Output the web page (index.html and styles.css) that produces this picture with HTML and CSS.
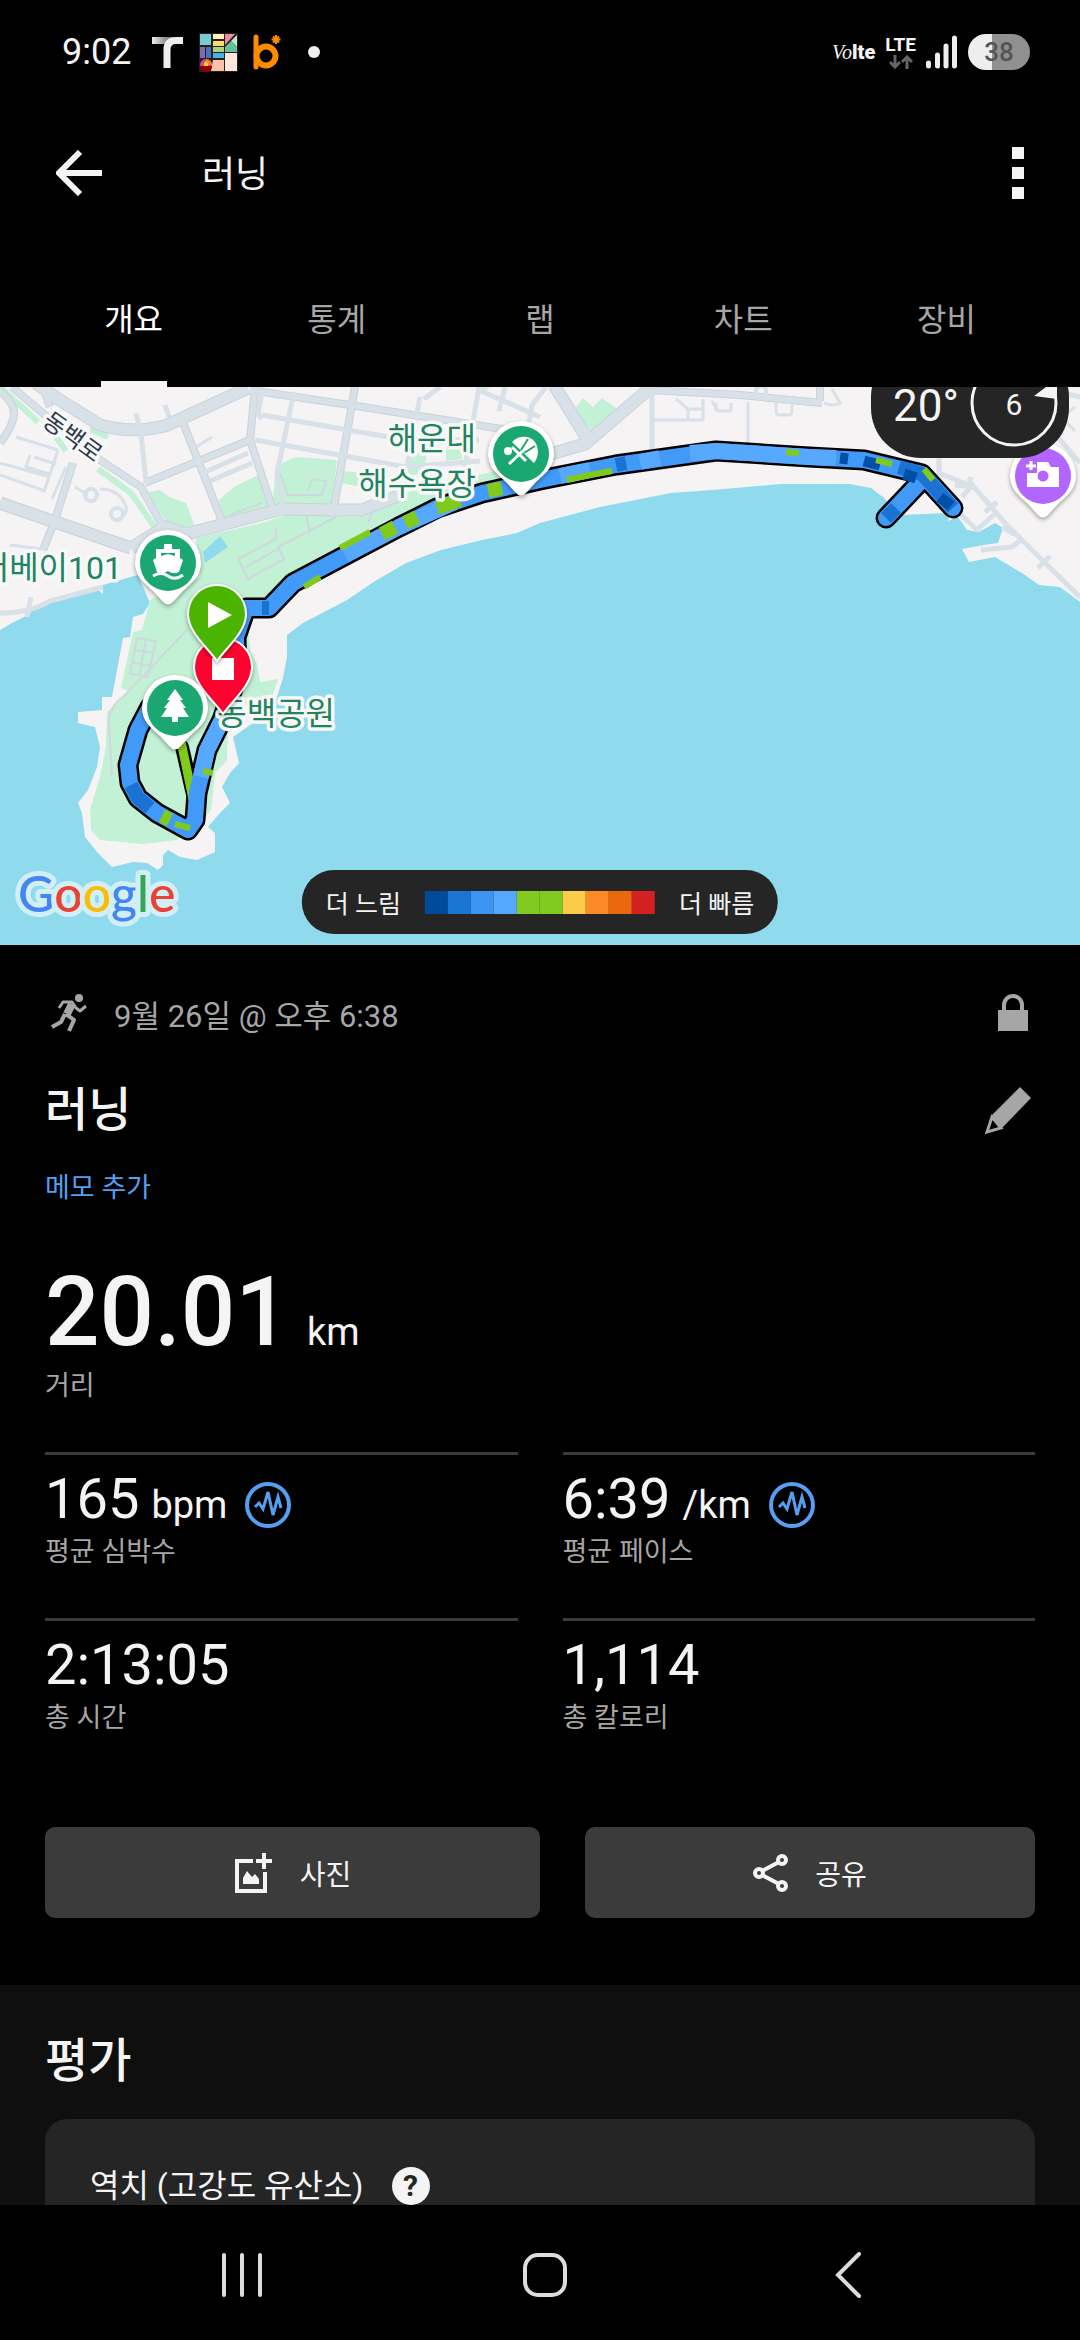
FILE: index.html
```html
<!DOCTYPE html>
<html lang="ko">
<head>
    <meta charset="UTF-8">
    <meta name="viewport" content="width=device-width, initial-scale=1.0">
    <meta name="color-scheme" content="dark">
    <title>러닝</title>
    <link rel="stylesheet" href="styles.css">
</head>
<body>
    <div class="status-bar">
        <div class="status-left">
            <span class="clock">9:02</span>
            <svg width="32" height="32" viewBox="0 0 32 32">
                <defs>
                    <linearGradient id="fade"><stop offset="0" stop-color="#eee"/><stop offset="1" stop-color="#555"/></linearGradient>
                </defs>
                <path d="M0 1h22l-6 7H0z" fill="url(#fade)"/>
                <path d="M31 4.500h-7q-9 0-9 9V32" fill="none" stroke="#eee" stroke-width="7"/>
            </svg>
            <svg width="39" height="39" viewBox="0 0 39 39">
                <rect width="39" height="39" fill="#222"/>
                <path d="M1 1h11v11H1z" fill="#79cbd0"/>
                <path d="M14 1h11v5H14z" fill="#fff3b8"/>
                <path d="M14 8h11v5H14z" fill="#fcd872"/>
                <path d="M26 1h10l-10 11z" fill="#f08aa0"/>
                <path d="M38 2v12l-6-6z" fill="#bfe8cc"/>
                <path d="M26 14l6-6 6 6v5H26z" fill="#64c096"/>
                <path d="M1 14h5v11H1z" fill="#8468b4"/>
                <path d="M7 14h5v11H7z" fill="#4a72b8"/>
                <path d="M14 14h11v5H14z" fill="#b0d07a"/>
                <path d="M14 20h11v5H14z" fill="#4cb0e8"/>
                <path d="M14 27h11v11H12z" fill="#fcc0a8"/>
                <path d="M26 20h12v18H26z" fill="#ffe6dc"/>
                <circle cx="7" cy="32" r="6" fill="#e0409a"/>
                <path d="M7 26a6 6 0 0 1 6 6H7z" fill="#f08030"/>
                <path d="M1 33h12a6 6 0 0 1-12 0z" fill="#900"/>
                <path d="M5 33v-3l2-2 2 2v3z" fill="#fd0"/>
            </svg>
            <svg width="28" height="36" viewBox="0 0 28 36">
                <path d="M3 3v30" stroke="#fb8c00" stroke-width="5" stroke-linecap="round"/>
                <circle cx="13" cy="22" r="9.500" fill="none" stroke="#fb8c00" stroke-width="6"/>
                <path d="M23 1v9M18.500 5.500h9M20 2.500l6 6M26 2.500l-6 6" stroke="#fb8c00" stroke-width="2"/>
            </svg>
            <span class="dot"></span>
        </div>
        <div class="status-right">
            <span class="volte"><i>Vo</i><b>lte</b></span>
            <span class="lte">
                <b>LTE</b>
                <svg width="24" height="14" viewBox="0 0 24 14" fill="none" stroke="#666" stroke-width="3">
                    <path d="M6 0v12M1 7l5 5 5-5M18 14V2M13 7l5-5 5 5"/>
                </svg>
            </span>
            <svg width="32" height="34" viewBox="0 0 32 34" stroke="#eee" stroke-width="5" stroke-linecap="round">
                <path d="M2.500 28v3M11.500 20v11M20 11v20M28.500 3v28"/>
            </svg>
            <span class="battery">38</span>
        </div>
    </div>

    <header class="app-bar">
        <button class="icon-button" aria-label="뒤로">
            <svg width="46" height="46" viewBox="0 0 46 46" fill="none" stroke="#f4f4f4" stroke-width="6">
                <path d="M46 23H4M24 2L3 23l21 21"/>
            </svg>
        </button>
        <h1>러닝</h1>
        <button class="icon-button" aria-label="메뉴">
            <svg width="12" height="52" viewBox="0 0 12 52" fill="#f4f4f4">
                <path d="M0 0h12v12H0zM0 20h12v12H0zM0 40h12v12H0z"/>
            </svg>
        </button>
    </header>

    <nav class="tabs">
        <a href="#" class="tab active">개요</a>
        <a href="#" class="tab">통계</a>
        <a href="#" class="tab">랩</a>
        <a href="#" class="tab">차트</a>
        <a href="#" class="tab">장비</a>
    </nav>

    <main>
        <div class="map">
            <svg class="map-canvas" viewBox="0 0 1080 558" preserveAspectRatio="xMidYMid slice">
                <defs>
                    <path id="pin" d="M0-33a33 33 0 0 0-33 33C-33 13-24 20-15 28L-6 38Q0 45 6 38L15 28C24 20 33 13 33 0A33 33 0 0 0 0-33z"/>
                    <path id="flag" d="M0-29a29 29 0 0 0-29 29C-29 18-10 33 0 47 10 33 29 18 29 0A29 29 0 0 0 0-29z"/>
                </defs>
                <rect width="1080" height="558" fill="#f5f3f4"/>

                <!-- sea -->
                <path fill="#90daee" d="M0 243L12 236 30 227 31 221 59 210 98 203 103 207 103 198 138 188 150 216 143 227 133 230 130 250 123 251 112 310 102 310 102 323 78 325 78 336 95 340 100 360 97 380 88 403 78 416 82 426 85 450 97 465 108 476 112 480 133 475 147 476 158 483 163 478 163 468 168 463 180 470 197 473 215 465 215 446 208 440 220 426 230 416 222 400 230 386 239 376 233 350 257 333 277 310 283 291 287 270 287 248 303 236 347 213 372 196 406 176 441 163 482 153 517 146 540 136 600 120 671 106 712 103 781 97 850 97 871 101 884 111 900 128 950 126 948 134 958 130 967 143 979 145 995 136 1003 141 998 156 984 158 962 162 969 175 995 170 1022 186 1039 198 1060 200 1080 215V558H0z"/>

                <!-- parks -->
                <g fill="#c3f1d5">
                    <path d="M196 151L262 136 286 128 358 130 413 103 496 84 540 82 482 106 379 145 293 196 269 221 247 222 250 262 257 277 260 295 278 292 273 308 247 316 228 346 227 373 215 386 211 423 203 433 177 453 143 457 100 453 91 443 90 423 100 390 106 360 107 325 128 304 121 301 133 245 142 243 150 213 200 190z"/>
                    <path d="M275 90L282 76 296 70 337 73 331 120 272 122zM219 113L234 100 258 88 272 120 224 133zM148 105L160 103 169 110 186 116 195 140 169 140zM341 84L375 87 372 102 341 96zM410 67L427 64 424 86 406 90zM574 23L583 11 593 20 602 11 619 23 593 46zM476 0h14l-8 8zM446 60l16-2v14l-16 2z"/>
                </g>
                <path d="M203 165L220 149 228 160 205 176z" fill="#90daee"/>
                <g fill="none" stroke="#c3f1d5" stroke-width="6">
                    <path d="M0 0L38 35M56 50L66 64M90 42L108 50M98 82L131 106 156 142"/>
                </g>

                <!-- streets -->
                <g fill="none" stroke="#c8d3da" stroke-linejoin="round">
                    <path stroke-width="13" d="M36-4L58 12 100 38Q130 47 165 39L248 1M0 116L55 135 131 161"/>
                    <path stroke-width="13" d="M131 161L165 140 186 147 282 122 334 123 362 123 400 108M540 70L585 57 650 1M554-2L588 53"/>
                    <path stroke-width="8" d="M12 0L59 40 100 73 141 100 163 140M0 4Q14 16 14 26 14 38 0 56M73 76L55 133 43 163M182 33L203 86 222 134M255 0L250 53 272 120M145 96L250 53M650 3L740 8 822 16M43 0L50 20M820 0V14M250 3L350 18 540 48M355 0L334 120"/>
                </g>
                <g fill="none" stroke="#d8e0e8" stroke-linejoin="round">
                    <path stroke-width="11" d="M36-4L58 12 100 38Q130 47 165 39L248 1M0 116L55 135 131 161"/>
                    <path stroke-width="11" d="M131 161L165 140 186 147 282 122 334 123 362 123 400 108M540 70L585 57 650 1M554-2L588 53"/>
                    <path stroke-width="6" d="M12 0L59 40 100 73 141 100 163 140M0 4Q14 16 14 26 14 38 0 56M73 76L55 133 43 163M182 33L203 86 222 134M255 0L250 53 272 120M145 96L250 53M650 3L740 8 822 16M43 0L50 20M820 0V14M250 3L350 18 540 48M355 0L334 120"/>
                    <path stroke-width="5" d="M141 46L146 96M203 86L248 66M210 94L252 76M294 5L277 86 283 118M479 0L465 80M420 10L405 90M255 53L406 80 480 74M262 28L400 52 479 53M479 3L540 30M424 12L440 0M505 0l-6 24M262 6l-4 20 4 6M652 5V63M528 40l4-22 14-18M120 0M165 18l4 12M136 26l3 12M939 70V86L974 100 1005 136 1039 170 1080 210M955 98l19 2M971 90l-4 10M997 115l-12 10M1020 150l-18-10M1050 169l-12 12M1058 50L1080 76M953 120L977 143 998 124M962 110l12-14M981 163L1012 160 1022 152M0 226Q30 226 50 214L103 200M31 210l-4 20M1060 5L1080 10"/>
                    <path stroke-width="3" d="M16 50L58 63M58 63L44 105M0 76L50 90M34 70L56 77M30 68l-4 12 24 7M0 88L45 104M66 80L52 112M75 100L88 108M100 102Q120 102 126 120 128 128 118 132M9 166l30 14M10 158l32 4M196 60l16-10M652 33H703V12M676 12l12 10H703M688 22V33M712 14l6 10h13M716 16v8M731 16v8M748 15V56M776 16v8q0 4 4 4h8q4 0 4-4v-6M832 2l8 14q-8 4-16 0M1075 20l-14 10 14 14"/>
                    <circle cx="91" cy="108" r="6" stroke-width="4"/>
                    <circle cx="117" cy="127" r="6" stroke-width="4"/>
                    <circle cx="761" cy="4" r="5" stroke-width="4"/>
                </g>
                <g fill="none" stroke="#cfd8e0" stroke-width="2">
                    <path d="M187 243L123 310Q108 320 109 340L112 388M230 128l32-12M280 86l8 22h34l4-14-14-2-4 12M238 172l10 20 36-20-6-12 58-30M238 172l38-20v-12M246 180l32-18M306 128l4 18M368 136l6-14M137 251l19 3-8 36-18-3zM134 263l20 3M131 275l20 4M146 253l-7 36"/>
                </g>

                <!-- track -->
                <g fill="none" stroke-linejoin="round" stroke-linecap="round">
                    <g stroke="#000" stroke-width="21">
                        <path d="M953 121L922 87 864 73 809 70 716 64 616 78 540 93 482 106 437 121 399 140 293 196 269 221 246 221 236 250 237 290 222 333 207 363 197 406 195 433 188 443 157 426 138 411 130 396 128 378 138 343 150 320"/>
                        <path d="M886 131L922 93"/>
                        <path d="M182 360L194 412" stroke-width="14"/>
                    </g>
                    <path d="M178 340L193 412" stroke="#80ca1e" stroke-width="9"/>
                    <g stroke="#429af8" stroke-width="16">
                        <path d="M953 121L922 87 864 73 809 70 716 64 616 78 540 93 482 106 437 121 399 140 293 196 269 221 246 221 236 250 237 290 222 333 207 363 197 406 195 433 188 443 157 426 138 411 130 396 128 378 138 343 150 320"/>
                        <path d="M886 131L922 93"/>
                    </g>
                    <g stroke-linecap="butt">
                        <path d="M690 66L716 64 809 70 836 71M455 115L399 140 345 168M640 75L660 71M560 89L590 83M222 333L207 363 201 390" stroke="#57a8ff" stroke-width="16"/>
                        <path d="M899 80L922 87 933 99M953 121L933 99M131 398L138 411 150 421M262 221L269 221M616 78L626 76M886 131L896 121" stroke="#1b72d3" stroke-width="14"/>
                        <path d="M840 71L848 72M864 74L880 78M940 110L951 119M904 87L916 91" stroke="#004fa6" stroke-width="11"/>
                        <path d="M382 147L395 140M405 136L417 130M437 121L460 113M488 104L502 101M162 429L170 433" stroke="#80ca1e" stroke-width="14"/>
                        <path d="M786 65L799 66M876 73L892 77M924 82L933 93M175 437L190 441M203 384L213 386M567 93L590 88 612 84M320 190L304 200M340 161L370 145" stroke="#80ca1e" stroke-width="6"/>
                    </g>
                </g>

                <!-- place names -->
                <g class="place">
                    <text x="476" y="63" text-anchor="end">해운대</text>
                    <text x="476" y="108" text-anchor="end">해수욕장</text>
                    <text x="122" y="192" text-anchor="end">더베이101</text>
                    <text x="335" y="338" text-anchor="end">동백공원</text>
                </g>
                <text class="street" x="72" y="58" text-anchor="middle" transform="rotate(36 72 51)">동백로</text>

                <!-- markers -->
                <g class="marker" transform="translate(521 67)">
                    <use href="#pin" fill="#fff"/>
                    <circle r="28" fill="#1aa772"/>
                    <circle cx="-13" cy="-3" r="4" fill="#fff"/>
                    <path d="M-12 10L6-7M-9-7L5 7" stroke="#fff" stroke-width="3"/>
                    <path d="M-9-12C-2-20 10-18 14-12 18-6 18 3 13 9z" fill="#fff"/>
                    <path d="M0-4L7-15M3-1L14-8" stroke="#1aa772" stroke-width="2"/>
                </g>
                <g class="marker" transform="translate(168 176)">
                    <use href="#pin" fill="#fff"/>
                    <circle r="28" fill="#1aa772"/>
                    <path d="M-12-5v-9h8v-5h8v5h8v9l3 2-4 12Q6 12 0 8q-6 4-11 1l-4-12z" fill="#fff"/>
                    <path d="M-7-10H7v3L0-9l-7 2z" fill="#1aa772"/>
                    <path d="M-15 13q8-5 15 0t15-1" fill="none" stroke="#fff" stroke-width="3"/>
                </g>
                <g class="marker" transform="translate(223 280)">
                    <use href="#flag" fill="#fc0330" stroke="#fff" stroke-width="2"/>
                    <path d="M-11-9h22v22h-22z" fill="#fff"/>
                </g>
                <g class="marker" transform="translate(217 227)">
                    <use href="#flag" fill="#4bb400" stroke="#fff" stroke-width="2"/>
                    <path d="M-9-12L15 1-9 14z" fill="#fff"/>
                </g>
                <g class="marker" transform="translate(175 321)">
                    <use href="#pin" fill="#fff"/>
                    <circle r="28" fill="#1aa772"/>
                    <path d="M0-19l8 11H5L11 0H8l6 9H3v5h-6V9h-11l6-9h-3l6-8h-3z" fill="#fff"/>
                </g>
                <g class="marker" transform="translate(1043 89)">
                    <use href="#pin" fill="#fff"/>
                    <circle r="28" fill="#b366ff"/>
                    <path d="M-16-3h10v-11H5l3 5h8v20h-32z" fill="#fff"/>
                    <circle r="5.500" fill="#b366ff"/>
                    <path d="M-12-15v9M-17-10h10" stroke="#fff" stroke-width="3"/>
                </g>

                <text class="google" x="18" y="525"><tspan fill="#4285f4">G</tspan><tspan fill="#ea4335">o</tspan><tspan fill="#fbbc05">o</tspan><tspan fill="#4285f4">g</tspan><tspan fill="#34a853">l</tspan><tspan fill="#ea4335">e</tspan></text>

                <!-- weather and wind -->
                <rect x="871" y="-40" width="198" height="111" rx="50" fill="#252525"/>
                <circle cx="1014" cy="16" r="42" fill="none" stroke="#f4f4f4" stroke-width="3"/>
                <path d="M1034 9L1050-3h7v15z" fill="#f4f4f4"/>
                <text class="weather" x="893" y="34">20°</text>
                <text class="wind" x="1014" y="28" text-anchor="middle">6</text>
            </svg>
            <div class="legend">
                <span>더 느림</span>
                <span class="scale">
                    <i class="c1"></i><i class="c2"></i><i class="c3"></i><i class="c4"></i><i class="c5"></i><i class="c5"></i><i class="c6"></i><i class="c7"></i><i class="c8"></i><i class="c9"></i>
                </span>
                <span>더 빠름</span>
            </div>
        </div>

        <section class="summary">
            <div class="row meta">
                <svg width="36" height="38" viewBox="0 0 36 38" fill="none" stroke="#a6a6a6" stroke-width="3" stroke-linejoin="round">
                    <circle cx="28" cy="4" r="4" fill="#a6a6a6" stroke="none"/>
                    <path d="M8 14l4-6 9 0 4 6 4 3 6-5"/>
                    <path d="M21 10l-5 10" stroke-width="8"/>
                    <path d="M15 20l8 6-5 11M14 20l-4 8-9 5" stroke-width="4"/>
                </svg>
                <span class="date">9월 26일 @ 오후 6:38</span>
                <svg width="30" height="38" viewBox="0 0 30 38">
                    <path d="M6 18V11a9 9 0 0 1 18 0v7" fill="none" stroke="#a6a6a6" stroke-width="4"/>
                    <path d="M0 16h30v21H0z" fill="#a6a6a6"/>
                </svg>
            </div>
            <div class="row title">
                <h2>러닝</h2>
                <button class="icon-button" aria-label="수정">
                    <svg width="46" height="47" viewBox="0 0 46 47" fill="#a6a6a6">
                        <path d="M35 0l11 11-29 30L6 29z"/>
                        <path d="M7 30L2 45l14-4z" fill="#000" stroke="#a6a6a6" stroke-width="3"/>
                    </svg>
                </button>
            </div>
            <a href="#" class="memo">메모 추가</a>

            <div class="distance"><b>20.01</b> <span class="unit">km</span></div>
            <div class="label">거리</div>

            <div class="stats">
                <div class="stat">
                    <div class="value">165 <span class="unit">bpm</span>
                        <svg width="46" height="46" viewBox="0 0 46 46" fill="none" stroke="#549ff2">
                            <circle cx="23" cy="23" r="21" stroke-width="4"/>
                            <path d="M10 25l4-4 4 6 5-17 5 23 5-18 3 11" stroke-width="3"/>
                        </svg>
                    </div>
                    <div class="label">평균 심박수</div>
                </div>
                <div class="stat">
                    <div class="value">6:39 <span class="unit">/km</span>
                        <svg width="46" height="46" viewBox="0 0 46 46" fill="none" stroke="#549ff2">
                            <circle cx="23" cy="23" r="21" stroke-width="4"/>
                            <path d="M10 25l4-4 4 6 5-17 5 23 5-18 3 11" stroke-width="3"/>
                        </svg>
                    </div>
                    <div class="label">평균 페이스</div>
                </div>
                <div class="stat">
                    <div class="value">2:13:05</div>
                    <div class="label">총 시간</div>
                </div>
                <div class="stat">
                    <div class="value">1,114</div>
                    <div class="label">총 칼로리</div>
                </div>
            </div>

            <div class="actions">
                <button class="action photo">
                    <svg width="40" height="40" viewBox="0 0 40 40" fill="none" stroke="#f4f4f4" stroke-width="4">
                        <path d="M19 8H3v30h28V19M30 0v16M22 8h16"/>
                        <path d="M9 31v-6l4-7 5 6 3-3 4 5v5z" fill="#f4f4f4" stroke="none"/>
                    </svg>
                    사진
                </button>
                <button class="action share">
                    <svg width="36" height="38" viewBox="0 0 36 38" fill="none" stroke="#f4f4f4" stroke-width="4">
                        <circle cx="6" cy="19" r="4"/>
                        <circle cx="29" cy="6" r="4"/>
                        <circle cx="29" cy="32" r="4"/>
                        <path d="M9 17L26 8M9 21l17 9"/>
                    </svg>
                    공유
                </button>
            </div>
        </section>

        <section class="rating">
            <h2>평가</h2>
            <div class="card">
                <span>역치 (고강도 유산소)</span>
                <button class="help" aria-label="도움말">?</button>
            </div>
        </section>
    </main>

    <div class="nav-bar">
        <button class="icon-button" aria-label="최근 앱">
            <svg width="40" height="46" viewBox="0 0 40 46" stroke="#ddd" stroke-width="4" stroke-linecap="round">
                <path d="M2 3v40M20 3v40M38 3v40"/>
            </svg>
        </button>
        <button class="icon-button" aria-label="홈">
            <svg width="46" height="46" viewBox="0 0 46 46" fill="none" stroke="#ddd" stroke-width="4">
                <rect x="3" y="3" width="40" height="40" rx="13"/>
            </svg>
        </button>
        <button class="icon-button" aria-label="뒤로">
            <svg width="26" height="46" viewBox="0 0 26 46" fill="none" stroke="#ddd" stroke-width="4" stroke-linecap="round">
                <path d="M24 2L3 23l21 21"/>
            </svg>
        </button>
    </div>
</body>
</html>
```

FILE: styles.css
```css
* {
    box-sizing: border-box;
}
body {
    background-color: #000;
    color: #f4f4f4;
    font-family: Roboto, "Noto Sans CJK KR", sans-serif;
    height: 100vh;
    display: flex;
    flex-direction: column;
    margin: 0;
}
h1, h2 {
    margin: 0;
    font-weight: 400;
}
svg {
    display: block;
    flex-shrink: 0;
}
button {
    background: none;
    border: none;
    color: inherit;
    font: inherit;
    padding: 0;
    cursor: pointer;
}
a {
    text-decoration: none;
}

/* status bar */
.status-bar {
    display: flex;
    justify-content: space-between;
    align-items: center;
    height: 104px;
    padding: 0 50px 0 62px;
}
.status-left, .status-right {
    display: flex;
    align-items: center;
}
.status-left {
    gap: 15px;
}
.status-right {
    gap: 10px;
}
.clock {
    font-size: 36px;
    margin-right: 6px;
}
.dot {
    width: 12px;
    height: 12px;
    border-radius: 50%;
    background-color: #eee;
    margin-left: 12px;
}
.volte {
    font-size: 20px;
}
.volte i {
    font-family: "Liberation Serif", serif;
}
.volte b {
    font-weight: 900;
}
.lte {
    display: flex;
    flex-direction: column;
    align-items: center;
    font-size: 19px;
    line-height: 20px;
}
.battery {
    width: 62px;
    height: 36px;
    border-radius: 18px;
    background: linear-gradient(90deg, #eee 38%, #909090 38%);
    color: #555;
    font-size: 26px;
    font-weight: 500;
    line-height: 36px;
    text-align: center;
}

/* app bar */
.app-bar {
    display: flex;
    align-items: center;
    height: 138px;
    padding: 0 56px;
}
.app-bar h1 {
    flex: 1;
    padding: 0 0 4px 100px;
    font-size: 36px;
}

.tabs {
    display: grid;
    grid-template-columns: repeat(5, 1fr);
    padding: 0 32px;
}
.tab {
    display: flex;
    flex-direction: column;
    align-items: center;
    justify-content: space-between;
    height: 145px;
    padding-top: 54px;
    color: #a6a6a6;
    font-size: 32px;
    line-height: 48px;
}
.tab::after {
    content: "";
    width: 66px;
    height: 6px;
}
.tab.active {
    color: #fff;
}
.tab.active::after {
    background-color: #f4f4f4;
}

main {
    flex: 1;
    min-height: 0;
    overflow: auto;
    scrollbar-width: none;
}

/* map */
.map {
    position: relative;
    aspect-ratio: 1080 / 558;
    overflow: hidden;
}
.map-canvas {
    width: 100%;
    height: 100%;
}
.place, .street {
    stroke: #f8f8f8;
    stroke-width: 7px;
    stroke-linejoin: round;
    paint-order: stroke;
}
.place {
    fill: #20845f;
    font-size: 32px;
}
.street {
    fill: #2c394b;
    font-size: 24px;
}
.marker {
    filter: drop-shadow(0 2px 2px rgba(0, 0, 0, 0.35));
}
.google {
    font-family: Lato, sans-serif;
    font-size: 50px;
    font-weight: 500;
    stroke: #d2eff8;
    stroke-width: 10px;
    stroke-linejoin: round;
    paint-order: stroke;
}
.weather {
    fill: #f4f4f4;
    font-size: 44px;
}
.wind {
    fill: #f4f4f4;
    font-size: 30px;
}
.legend {
    position: absolute;
    bottom: 11px;
    left: 50%;
    transform: translateX(-50%);
    display: flex;
    align-items: center;
    gap: 24px;
    height: 64px;
    padding: 0 24px;
    border-radius: 32px;
    background-color: #252525;
    font-size: 25px;
    white-space: nowrap;
}
.scale {
    display: flex;
}
.scale i {
    width: 23px;
    height: 23px;
}
.c1 { background-color: #004a9c; }
.c2 { background-color: #1b75d3; }
.c3 { background-color: #3d94f2; }
.c4 { background-color: #56a7ff; }
.c5 { background-color: #81ca20; }
.c6 { background-color: #fccb4a; }
.c7 { background-color: #fb8a27; }
.c8 { background-color: #e9680d; }
.c9 { background-color: #d32021; }

/* summary */
.summary {
    padding: 45px 45px 67px;
}
.row {
    display: flex;
    align-items: center;
}
.meta {
    height: 46px;
    gap: 27px;
    padding: 0 7px 0 6px;
    color: #a6a6a6;
    font-size: 31px;
}
.date {
    flex: 1;
}
.title {
    justify-content: space-between;
    height: 64px;
    margin-top: 42px;
    padding-right: 4px;
}
.title h2, .rating h2 {
    font-size: 47px;
    font-weight: 500;
    line-height: 64px;
}
.memo, .label {
    display: block;
    font-size: 27px;
    line-height: 36px;
}
.memo {
    margin-top: 28px;
    color: #549ff2;
}
.label {
    color: #a6a6a6;
}
.distance, .value {
    display: flex;
    align-items: baseline;
}
.distance {
    gap: 17px;
    margin-top: 50px;
    line-height: 112px;
}
.distance b {
    font-size: 96px;
    font-weight: 500;
}
.unit {
    font-size: 38px;
    line-height: 40px;
}
.stats {
    display: grid;
    grid-template-columns: 1fr 1fr;
    gap: 48px 45px;
    margin-top: 48px;
}
.stat {
    border-top: 3px solid #3b3b3b;
    padding-top: 11px;
}
.value {
    gap: 12px;
    font-size: 56px;
    line-height: 66px;
    margin-bottom: 2px;
}
.value svg {
    align-self: flex-end;
    margin: 0 0 4px 6px;
}
.actions {
    display: flex;
    gap: 45px;
    margin-top: 91px;
}
.action {
    display: flex;
    align-items: center;
    justify-content: center;
    gap: 26px;
    height: 91px;
    border-radius: 10px;
    background-color: #3b3b3b;
    font-size: 28px;
}
.photo {
    flex: 11;
}
.share {
    flex: 10;
}

/* rating */
.rating {
    background-color: #0f0f0f;
    padding: 44px 45px;
}
.card {
    display: flex;
    align-items: center;
    gap: 28px;
    margin-top: 26px;
    padding: 45px;
    border-radius: 22px;
    background-color: #252525;
    font-size: 32px;
    line-height: 44px;
}
.help {
    width: 38px;
    height: 38px;
    border-radius: 50%;
    background-color: #f4f4f4;
    color: #252525;
    font-size: 30px;
    font-weight: 700;
    line-height: 38px;
}

.nav-bar {
    display: grid;
    grid-template-columns: repeat(3, 1fr);
    height: 135px;
    padding: 4px 80px 0 90px;
}
.nav-bar .icon-button {
    display: flex;
    align-items: center;
    justify-content: center;
}
```
